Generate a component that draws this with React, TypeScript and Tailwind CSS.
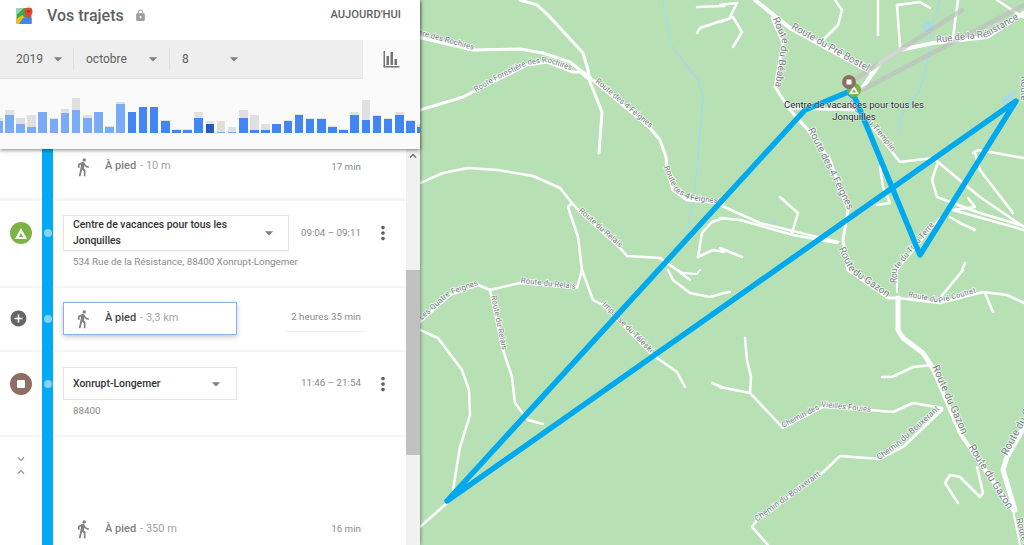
import * as React from "react"
import {
  MdAddCircle,
  MdArrowDropDown,
  MdDirectionsWalk,
  MdExpandLess,
  MdExpandMore,
  MdKeyboardArrowUp,
  MdLock,
  MdMoreVert,
} from "react-icons/md"

// [top of grey bar, top of blue bar, colour] measured from a baseline at y=133
const BASE = 133
const bars: [number, number, string][] = [
  [118, 121, "l"], [110, 115, "l"], [118, 124, "l"], [115, 127, "l"], [112, 112, "l"], [118, 119, "l"],
  [109, 113, "l"], [98, 110, "l"], [115, 118, "l"], [112, 112, "l"], [126, 127, "l"], [102, 104, "l"],
  [112, 112, "b"], [107, 107, "b"], [107, 107, "b"], [120, 121, "b"], [129, 130, "b"], [129, 130, "b"],
  [112, 118, "b"], [121, 124, "d"], [121, 132, "l"], [127, 132, "l"], [110, 118, "b"], [115, 130, "b"],
  [124, 130, "b"], [124, 124, "b"], [120, 121, "b"], [114, 115, "b"], [118, 119, "b"], [118, 119, "b"],
  [126, 127, "b"], [129, 130, "b"], [112, 115, "b"], [100, 120, "b"], [115, 116, "b"], [118, 119, "b"],
  [112, 115, "b"], [120, 121, "b"], [124, 127, "b"],
]
const barColor: Record<string, string> = { l: "#7baaf7", b: "#4285f4", d: "#2a56c6" }

// roads: [width, points]
const roads: [number, string][] = [
  [3, "520,0 537,5 548,15 583,53 588,70 590,82 602,112 599,153"],
  [3, "400,33 473,50 520,49 543,53 570,62 593,80 650,128 660,140 666,157 667,170 673,190 687,200 724,203"],
  [3, "420,110 463,97 493,82 527,65 547,62 573,72 580,72 590,80"],
  [2.5, "420,183 443,173 468,168 498,170 533,176 560,188 572,203 580,212 620,248 627,256 660,258 677,270 690,280"],
  [2.5, "572,203 568,207 578,237 582,270 577,288 520,283 490,290 478,285 450,295 420,322"],
  [2.5, "490,290 503,350 512,377 515,403 528,420 543,424"],
  [2.5, "582,270 593,300 603,305 650,353 677,372 685,387"],
  [2.5, "712,383 724,388"],
  [2.5, "720,387 750,393"],
  [2.5, "420,330 438,338 462,370 469,390 470,415 460,447 453,490"],
  [2.5, "420,527 447,503"],
  [2.5, "668,270 673,280 690,293 710,297 724,293 730,292"],
  [2, "678,270 683,273 697,274 700,270"],
  [2.5, "697,7 724,6"],
  [2.5, "697,33 700,28 724,20"],
  [2.5, "698,257 702,233 712,222 724,218"],
  [2.5, "698,257 713,250 724,252"],
  [4, "755,0 790,28 870,72"],
  [3, "772,18 783,43 775,87 790,110 808,130 830,160 848,210 843,240 848,270 888,298 898,298"],
  [3, "790,108 857,110"],
  [2.5, "720,22 733,17 742,32 733,47"],
  [2.5, "720,5 737,3 730,17"],
  [2.5, "835,0 842,10 838,25 820,43"],
  [2.5, "878,0 878,35"],
  [2.5, "897,5 900,47"],
  [2.5, "897,5 920,2 930,8"],
  [2.5, "958,0 953,38"],
  [2.5, "997,0 1024,18"],
  [4, "1024,13 987,37 933,43 900,50 880,63 863,87"],
  [2.5, "873,128 900,162 933,158 980,197 1024,227"],
  [2.5, "880,167 883,187 890,203 877,205"],
  [2.5, "938,162 932,180 937,197 977,212 1020,225"],
  [2.5, "973,153 978,150 1024,158"],
  [2.5, "975,153 980,170 1013,213"],
  [2.5, "968,198 975,207 953,210 1024,230"],
  [2.5, "950,217 960,223 975,230"],
  [2.5, "780,197 798,213 792,233"],
  [2.5, "720,205 760,223 838,242"],
  [2.5, "720,218 740,220 793,235 837,243"],
  [2.5, "720,248 742,257"],
  [2.5, "965,263 962,270"],
  [2, "897,292 897,270 940,218"],
  [5, "898,298 898,330 903,338 923,353 932,367"],
  [4, "932,367 960,433 978,460 1013,510"],
  [2.5, "898,298 940,303 983,292 1007,295 1024,303"],
  [2.5, "940,298 963,270"],
  [2.5, "985,293 993,312"],
  [2.5, "932,365 913,367 892,377 882,377"],
  [2.5, "745,338 747,360 751,377 750,393 783,428 823,407 870,410 893,412 913,403 942,408"],
  [2.5, "942,410 903,447 880,459 840,456 820,475 757,520 752,527 768,545"],
  [2.5, "977,467 983,493 980,497 960,477 950,475 945,483 958,503"],
  [5, "1024,427 1007,457 1003,470 1015,510"],
  [2, "1013,510 1020,545"],
]

// labels: [points, text, font size]
const labels: [number[][], string, number][] = [
  [[[373, 22], [474, 50]], "Route Forestière des Rochires", 7.8],
  [[[474, 93], [497, 80], [527, 65], [547, 62], [573, 71]], "Route Forestière des Rochires", 7.8],
  [[[595, 82], [650, 128]], "Route des 4 Feignes", 8],
  [[[664, 168], [675, 192], [690, 200], [717, 203]], "Route des 4 Feignes", 8],
  [[[578, 211], [620, 248]], "Route du Relais", 8],
  [[[422, 320], [450, 295], [478, 285]], "Les Quatre Feignes", 8],
  [[[520, 283], [576, 289]], "Route du Relais", 8],
  [[[491, 296], [502, 350]], "Route du Relais", 8],
  [[[602, 305], [650, 353]], "Impasse du Téléski", 8],
  [[[772, 18], [782, 40], [775, 88]], "Route du Béaba", 10],
  [[[790, 28], [868, 72]], "Route du Pré Bostel", 10],
  [[[933, 43], [987, 37], [1022, 17]], "Rue de la Résistance", 9.5],
  [[[808, 130], [848, 210]], "Route des 4 Feignes", 10],
  [[[838, 248], [850, 272], [888, 298]], "Route du Gazon", 10],
  [[[838, 95], [873, 128], [900, 162]], "Route du Tremplin", 8.2],
  [[[897, 292], [897, 270], [940, 218]], "Route du Trou Terre", 8.2],
  [[[906, 296], [940, 303], [978, 292]], "Route du Pré Coutret", 7.6],
  [[[932, 367], [962, 435]], "Route du Gazon", 10.5],
  [[[968, 447], [1008, 510]], "Route du Gazon", 10.5],
  [[[783, 428], [823, 407], [871, 412]], "Chemin des Vieilles Fouies", 7.8],
  [[[881, 459], [900, 445], [938, 411]], "Chemin du Bouxerant", 8.3],
  [[[758, 521], [820, 476]], "Chemin du Bouxerant", 8.3],
]

// runs both ends on so that a slightly long label is not dropped by the text path
function labelPath(pts: number[][]) {
  const stretch = (a: number[], b: number[]) => {
    const len = Math.hypot(a[0] - b[0], a[1] - b[1])
    return [a[0] + ((a[0] - b[0]) / len) * 40, a[1] + ((a[1] - b[1]) / len) * 40]
  }
  const all = [stretch(pts[0], pts[1]), ...pts, stretch(pts[pts.length - 1], pts[pts.length - 2])]
  return "M" + all.map((p) => p.join(" ")).join(" L")
}

function Caret({ className }: { className: string }) {
  return <MdArrowDropDown className={"text-[#808080] text-[20px] " + className} />
}

function Walk({ distance, strong }: { distance: string; strong?: boolean }) {
  return (
    <div className="flex items-center">
      <span className="w-[13px] flex justify-center">
        <MdDirectionsWalk className="text-[#808080] text-[20px] shrink-0" />
      </span>
      <span className={"ml-[16px] text-[11px] font-medium " + (strong ? "text-[#444444]" : "text-[#808080]")}>À pied</span>
      <span className="ml-[4px] text-[11px] text-[#a3a3a3]">- {distance}</span>
    </div>
  )
}

function Stop({ icon, children }: { icon: React.ReactNode; children: React.ReactNode }) {
  return (
    <div className="flex items-center">
      <div className="w-[42px] flex justify-center">{icon}</div>
      <div className="w-[11px] flex justify-center relative z-10">
        <span className="w-[8px] h-[8px] rounded-full bg-[#81d4fa]" />
      </div>
      <div className="ml-[10px] flex-1 flex items-center">{children}</div>
    </div>
  )
}

function MoreButton() {
  return <MdMoreVert className="ml-[10px] mr-[11px] text-[#616161] text-[22px] w-[24px]" />
}

export default function App() {
  return (
    <div className="flex w-[1024px] h-[545px] overflow-hidden bg-white [font-family:Roboto,sans-serif]">
      <div className="relative z-10 w-[420px] flex flex-col shrink-0 shadow-[1px_0_3px_rgba(0,0,0,0.35)]">
        <div className="relative z-10 shadow-[0_1px_4px_rgba(0,0,0,0.5)]">
          <div className="h-[40px] flex items-center bg-white pl-[16px] pr-[19px] pb-[9px]">
            <svg width="17" height="18" viewBox="0 0 17 18">
              <rect x="0.5" y="1" width="15" height="16" rx="1" fill="#34a853" />
              <path d="M0.5 17 L0.5 12 L6 8 L15.5 17 Z" fill="#fbbc04" />
              <path d="M7 11 L15.5 11 L15.5 17 L3 17 Z" fill="#4285f4" />
              <path d="M0.5 1 L8 1 L0.5 8 Z" fill="#9bd2a9" />
              <circle cx="12.5" cy="4.5" r="4" fill="#ea4335" />
              <path d="M9 6 L12.5 12 L16 6 Z" fill="#ea4335" />
              <circle cx="12.5" cy="4.5" r="1.3" fill="#a52714" />
            </svg>
            <span className="ml-[14px] text-[16px] font-medium text-[#5f5f5f]">Vos trajets</span>
            <MdLock className="ml-[10px] text-[#9e9e9e] text-[13px]" />
            <span className="ml-auto text-[11.2px] font-medium text-[#616161]">AUJOURD'HUI</span>
          </div>
          <div className="h-[39px] flex items-center bg-[#eeeeee] border-b border-[#e3e3e3] text-[12px] text-[#616161]">
            <div className="w-[74px] h-[22px] flex items-center pl-[16px] border-r border-[#e0e0e0]">
              2019
              <Caret className="ml-[5px]" />
            </div>
            <div className="w-[96px] h-[22px] flex items-center pl-[12px] border-r border-[#e0e0e0]">
              octobre
              <Caret className="ml-[16px]" />
            </div>
            <div className="w-[90px] h-[22px] flex items-center pl-[12px]">
              8
              <Caret className="ml-[35px]" />
            </div>
            <div className="ml-auto w-[58px] h-[39px] flex items-center justify-center bg-[#fafafa] border-l border-[#e8e8e8]">
              <svg width="17" height="17" viewBox="0 0 17 17" fill="#757575">
                <rect x="0.5" y="0" width="1.5" height="16" />
                <rect x="0.5" y="15" width="16" height="1.5" />
                <rect x="3.5" y="5" width="2.5" height="9" />
                <rect x="7.5" y="1" width="2.5" height="13" />
                <rect x="11.5" y="8" width="2.5" height="6" />
              </svg>
            </div>
          </div>
          <div className="h-[70px] bg-[#fafafa] overflow-hidden flex items-end gap-[2.55px] pb-[16px] -ml-[6.1px]">
            {bars.map(([grey, blue, kind], i) => (
              <div key={i} className="w-[8.6px] shrink-0 flex flex-col">
                <div className="bg-[#e0e0e0]" style={{ height: blue - grey }} />
                <div style={{ height: BASE - blue, background: barColor[kind] }} />
              </div>
            ))}
          </div>
        </div>

        <div className="relative flex-1 min-h-0 flex overflow-hidden">
          <div className="absolute left-[42px] top-0 bottom-0 w-[11px] bg-[#03a9f4]" />
          <div className="w-[406px] shrink-0 text-[9.8px]">
            <div className="h-[52px] border-b-[3px] border-[#f5f5f5] flex items-start pt-[9px] pl-[76px] pr-[45px]">
              <div className="flex-1 h-[17px] flex items-center">
                <Walk distance="10 m" />
              </div>
              <span className="leading-[17px] text-[#8a8a8a]">17 min</span>
            </div>

            <div className="h-[87px] border-b-2 border-[#f5f5f5] pt-[14px]">
              <Stop
                icon={
                  <span className="w-[22px] h-[22px] rounded-full bg-[#7cb342] flex items-center justify-center">
                    <svg width="12" height="11" viewBox="0 0 12 11">
                      <path fillRule="evenodd" d="M6 0 L12 11 L0 11 Z M6 5 L3.8 9 L8.2 9 Z" fill="#fff" />
                    </svg>
                  </span>
                }
              >
                <div className="w-[226px] h-[36px] border border-[#e3e3e3] shadow-[0_1px_1px_rgba(0,0,0,0.04)] flex items-center pl-[9px]">
                  <span className="w-[186px] text-[10.4px] leading-[16px] font-medium text-[#333333]">
                    Centre de vacances pour tous les Jonquilles
                  </span>
                  <Caret className="" />
                </div>
                <span className="ml-auto text-[#8a8a8a]">09:04 – 09:11</span>
                <MoreButton />
              </Stop>
              <div className="pl-[73px] mt-[4px] leading-[14px] text-[#8a8a8a]">
                534 Rue de la Résistance, 88400 Xonrupt-Longemer
              </div>
            </div>

            <div className="h-[64px] border-b-2 border-[#f5f5f5] pt-[14px]">
              <Stop icon={<MdAddCircle className="text-[#666666] text-[19px] -ml-[5px]" />}>
                <div className="w-[174px] h-[33px] border border-[#8ab0ee] shadow-[0_2px_5px_rgba(0,0,0,0.22)] flex items-center pl-[12px]">
                  <Walk distance="3,3 km" strong />
                </div>
                <span className="ml-[49px] w-[80px] h-[27px] flex items-center justify-center border-b border-[#eeeeee] mt-[-1px] text-[#8a8a8a]">
                  2 heures 35 min
                </span>
              </Stop>
            </div>

            <div className="h-[85px] border-b-2 border-[#f5f5f5] pt-[15px]">
              <Stop
                icon={
                  <span className="w-[22px] h-[22px] rounded-full bg-[#8d6e63] flex items-center justify-center">
                    <span className="w-[8px] h-[8px] bg-white rounded-[1px]" />
                  </span>
                }
              >
                <div className="w-[174px] h-[33px] border border-[#e3e3e3] flex items-center pl-[9px]">
                  <span className="w-[133px] text-[10.4px] font-medium text-[#333333]">Xonrupt-Longemer</span>
                  <Caret className="" />
                </div>
                <span className="ml-auto text-[#8a8a8a]">11:46 – 21:54</span>
                <MoreButton />
              </Stop>
              <div className="pl-[73px] mt-[4px] leading-[14px] text-[#8a8a8a]">88400</div>
            </div>

            <div className="relative">
              <div className="w-[42px] flex flex-col items-center pt-[15px] text-[#8a8a8a] text-[14px] leading-none">
                <MdExpandMore className="-mb-[1px]" />
                <MdExpandLess />
              </div>
              <div className="flex items-center pt-[40px] pl-[76px] pr-[45px]">
                <div className="flex-1">
                  <Walk distance="350 m" />
                </div>
                <span className="text-[#8a8a8a]">16 min</span>
              </div>
            </div>
          </div>

          <div className="w-[14px] bg-[#f1f1f1] flex flex-col">
            <div className="h-[121px]">
              <MdKeyboardArrowUp className="text-[#505050] text-[14px]" />
            </div>
            <div className="h-[185px] bg-[#c1c1c1]" />
          </div>
        </div>
      </div>

      <div className="flex-1 min-w-0 bg-[#b7e1b5]">
        <svg width="604" height="545" viewBox="420 0 604 545" className="block">
          <defs>
            {labels.map(([pts], i) => (
              <path key={i} id={"label-" + i} d={labelPath(pts)} />
            ))}
          </defs>

          <g fill="none" stroke="#a9d9e6" strokeWidth="1.5" strokeLinejoin="round">
            <polyline points="663,0 671,45 698,80 703,95 695,190 687,233" />
            <polyline points="940,0 933,20 927,63 920,90 900,117 900,137" />
            <polyline points="1003,102 1013,94" strokeWidth="5" strokeLinecap="round" />
          </g>
          <ellipse cx="928" cy="27" rx="5" ry="5" fill="#a9d9e6" />
          <ellipse cx="774" cy="222" rx="2" ry="3" fill="#a9d9e6" />

          <g fill="none" stroke="#ffffff" strokeLinejoin="round" strokeLinecap="round">
            {roads.map(([w, points], i) => (
              <polyline key={i} points={points} strokeWidth={w} />
            ))}
          </g>

          <g fill="none" stroke="#bdbdbd" strokeOpacity="0.65" strokeWidth="4.5" strokeLinecap="round">
            <line x1="857" y1="78" x2="962" y2="10" />
            <line x1="862" y1="90" x2="1024" y2="5" />
          </g>

          <g fontFamily="Roboto, sans-serif" fill="#7b7d8a" stroke="#ffffff" strokeOpacity="0.8" strokeWidth="1.5" style={{ paintOrder: "stroke" }}>
            {labels.map(([, text, size], i) => (
              <text key={i} fontSize={size} textAnchor="middle">
                <textPath href={"#label-" + i} startOffset="50%">
                  {text}
                </textPath>
              </text>
            ))}
            <text fontSize="9.5" transform="translate(1021 76) rotate(90)">Route</text>
            <text fontSize="10.5" transform="translate(1007 456) rotate(-62)">Route du Gazon</text>
            <text fontSize="9" transform="translate(1016 519) rotate(75)">Route du</text>
          </g>

          <polyline
            points="447,501 805,110 848,92 855,98 863,117 920,255 1016,101 447,501"
            fill="none"
            stroke="#00a8ee"
            strokeWidth="5.5"
            strokeLinejoin="round"
            strokeLinecap="round"
          />

          <circle cx="854" cy="90" r="7" fill="#7cb342" />
          <path fillRule="evenodd" d="M854 86 L859 94 L849 94 Z M854 89 L852 92.5 L856 92.5 Z" fill="#fff" />
          <circle cx="849" cy="82" r="7" fill="#8d6e63" />
          <rect x="846.5" y="79.5" width="5" height="5" fill="#fff" />

          <g fontFamily="Roboto, sans-serif" fontSize="9.5" fill="#1f2933" stroke="#ffffff" strokeOpacity="0.5" strokeWidth="1.2" textAnchor="middle" style={{ paintOrder: "stroke" }}>
            <text x="854" y="108">Centre de vacances pour tous les</text>
            <text x="854" y="119.5">Jonquilles</text>
          </g>
        </svg>
      </div>
    </div>
  )
}
